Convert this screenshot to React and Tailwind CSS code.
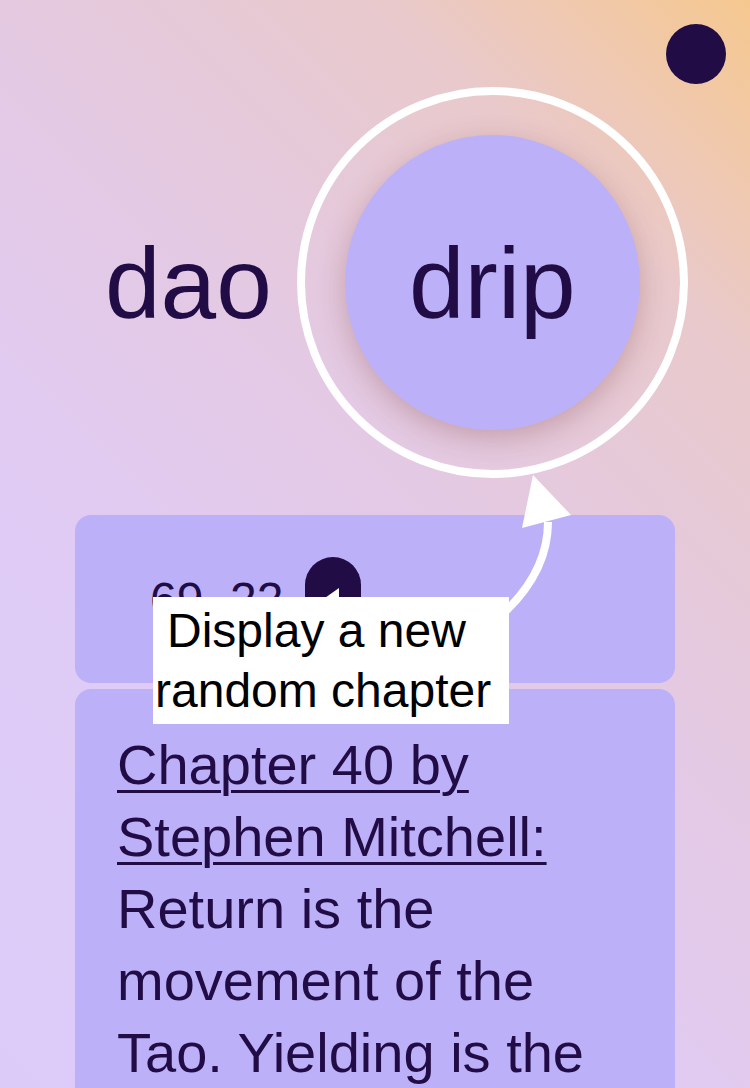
import React from 'react';

const ink = 'text-[#220c46]';

const App = () => {
  return (
    <div className="relative w-[750px] h-[1088px] overflow-hidden bg-[linear-gradient(45deg,#dccbf9_0%,#dfcbf6_30%,#e4c9e2_58%,#e9c9cc_80%,#f6c88f_100%)] font-['Liberation_Sans',Arial,sans-serif]">
      {/* Floating menu dot */}
      <button className="absolute top-6 right-6 w-[60px] h-[60px] rounded-full bg-[#220c46]" aria-label="menu"></button>

      {/* Header */}
      <div className="flex items-center pt-[135px] pl-[105px] gap-[73px]">
        <h1 className={`text-[100px] leading-none ${ink}`}>dao</h1>
        <div className="relative">
          <button className={`w-[295px] h-[295px] rounded-full bg-[#bcb1f8] flex items-center justify-center text-[100px] leading-none ${ink} shadow-[0_8px_28px_rgba(110,50,50,0.28)]`}>
            drip
          </button>
          {/* Highlight ring */}
          <div className="absolute -inset-[48px] rounded-full border-[8px] border-white pointer-events-none"></div>
        </div>
      </div>

      {/* Verse reference card */}
      <div className="mx-[75px] mt-[85px] rounded-2xl bg-[#bcb1f8] pl-[75px] pt-[42px] pb-[40px] flex items-center">
        <span className={`text-[48px] leading-none ${ink}`}>69, 22</span>
        <button className="ml-[22px] w-[56px] h-[86px] rounded-full bg-[#220c46] relative">
          <svg className="absolute inset-0" width="56" height="86" viewBox="0 0 56 86">
            <polygon points="34,31 34,55 17,43" fill="#ffffff" />
          </svg>
        </button>
      </div>

      {/* Chapter card */}
      <div className="mx-[75px] mt-[6px] rounded-2xl bg-[#bcb1f8] pl-[42px] pr-10 pt-10 pb-10">
        <p className={`text-[56px] leading-[72px] ${ink}`}>
          <a href="#" className="underline decoration-[3px] underline-offset-[6px]">Chapter 40 by Stephen Mitchell:</a>{' '}
          Return is the movement of the Tao. Yielding is the way of the Tao. All things are born of being. Being is born of non-being.
        </p>
      </div>

      {/* Tour tooltip */}
      <div className="absolute left-[153px] top-[597px] w-[356px] bg-white pl-[2px] pt-[4px] pb-[3px] indent-[12px] text-[48px] leading-[60px] text-black">
        Display a new random chapter
      </div>

      {/* Tooltip arrow */}
      <svg className="absolute left-0 top-0 pointer-events-none" width="750" height="1088" viewBox="0 0 750 1088">
        <path d="M506 611 Q548 570 548 522" fill="none" stroke="#ffffff" strokeWidth="8" />
        <polygon points="533,475 522,528 571,515" fill="#ffffff" />
      </svg>
    </div>
  );
};

export default App;
